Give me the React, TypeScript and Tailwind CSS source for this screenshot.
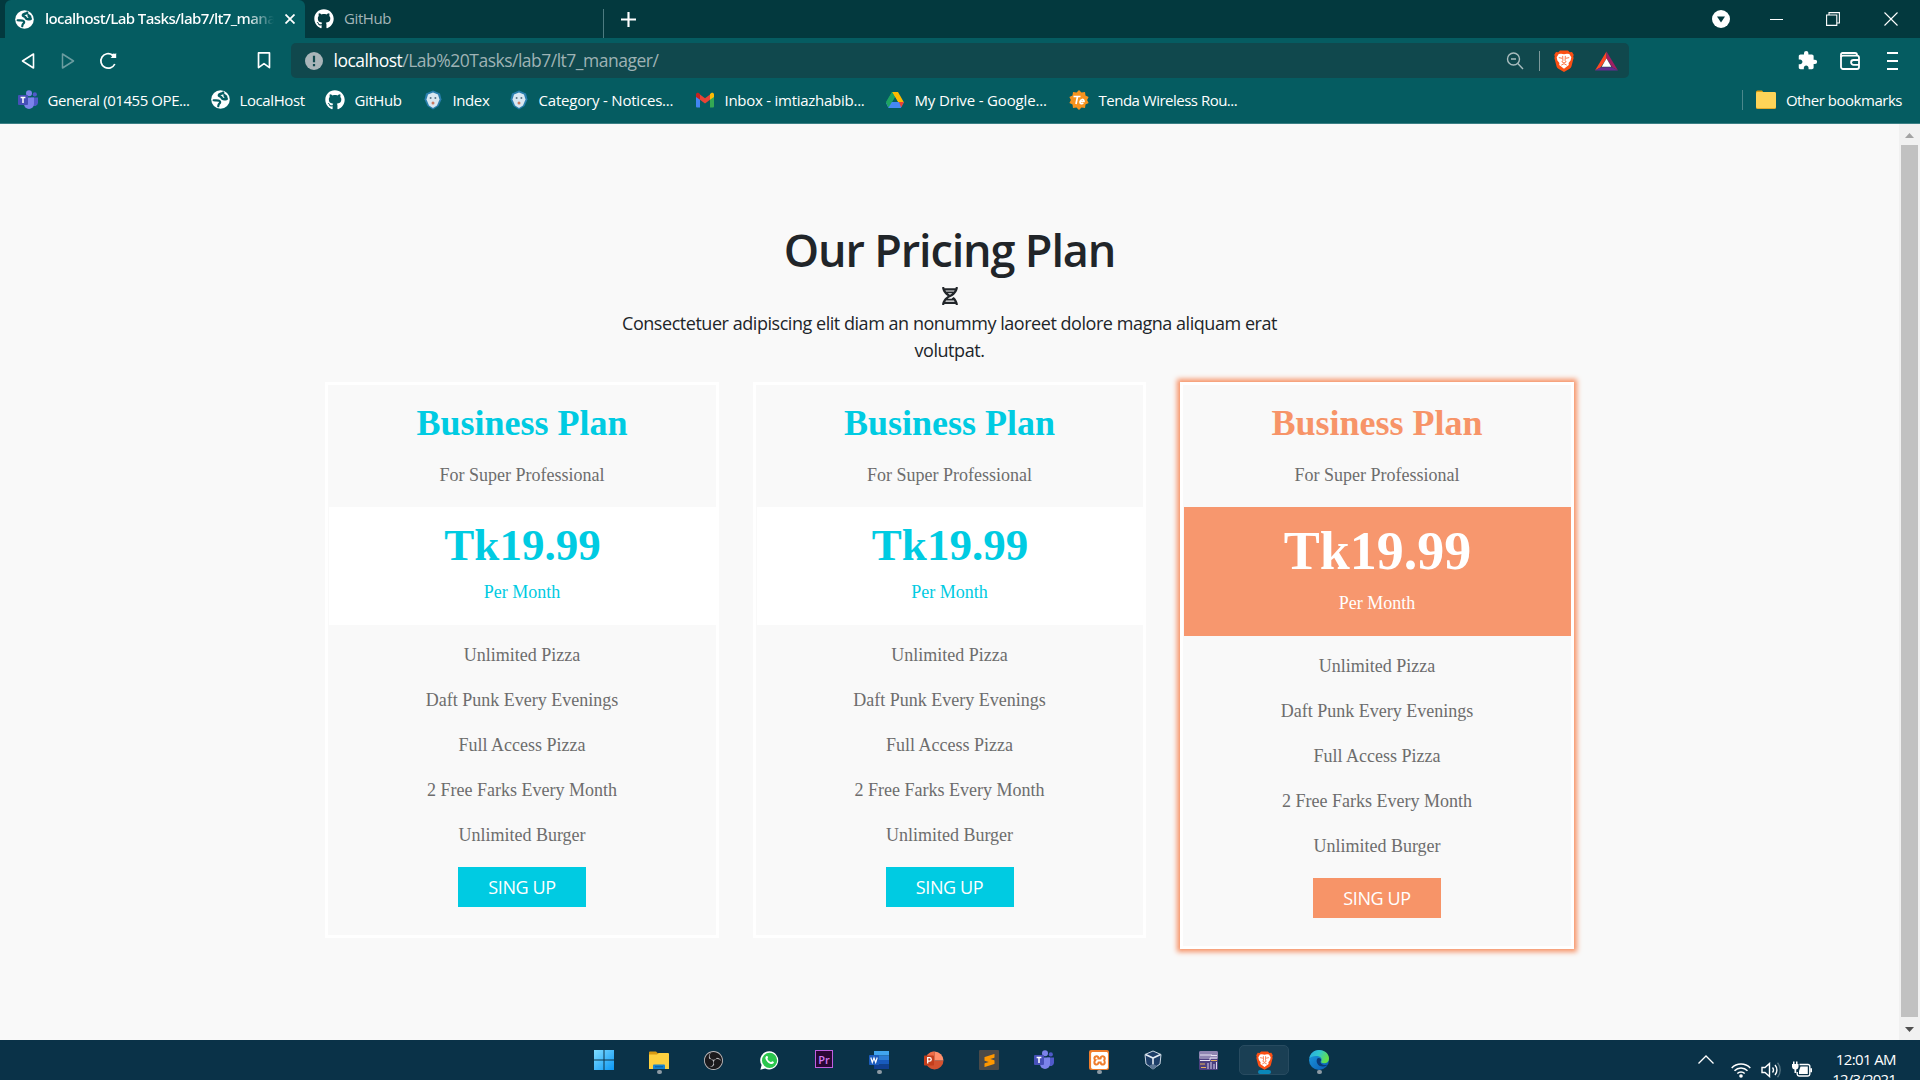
import React from "react";
import { FaGithub, FaDna } from "react-icons/fa";
import { MdExtension } from "react-icons/md";
import { SiObsstudio, SiXampp, SiSublimetext } from "react-icons/si";

const ui = "font-['Open_Sans','Noto_Sans',sans-serif]";

function Globe({ className }: { className: string }) {
  return (
    <svg viewBox="0 0 20 20" className={className}>
      <circle cx="10" cy="10" r="9.800" fill="#fff" />
      <path
        d="M12.800 2.800C11 4.200 8.500 3.800 8.200 5.400c-.2 1.500 2.300 1 2.800 2.400.5 1.500 2.300 2.500 5.300 1.700"
        fill="none"
        stroke="#055c61"
        strokeWidth="2.600"
        strokeLinecap="round"
      />
      <path d="M12.500 2.500l4.500 3.500.8 4-3-.5-1.500-3z" fill="#055c61" />
      <path
        d="M2.800 10.800c2 .2 4.800-.3 6 .6 1.500 1.200.8 2.400-.3 3.200-.9.700-.5 1.600-.9 2.400"
        fill="none"
        stroke="#055c61"
        strokeWidth="2.300"
        strokeLinecap="round"
      />
    </svg>
  );
}

function Teams({ className }: { className: string }) {
  return (
    <svg viewBox="0 0 20 20" className={className}>
      <circle cx="16.800" cy="4.400" r="2.100" fill="#5059c9" />
      <path d="M13 7.500h7v5.500a3.500 3.500 0 0 1-6 2z" fill="#5059c9" />
      <circle cx="11" cy="3.300" r="3" fill="#7b83eb" />
      <path d="M6 7.500h10v6.500a5 5 0 0 1-10 0z" fill="#7b83eb" />
      <rect x="0" y="5" width="10" height="10" rx="1" fill="#4650b8" />
      <path d="M2.600 7.500h4.800M5 7.500v5.500" stroke="#fff" strokeWidth="1.500" />
    </svg>
  );
}

function Crest() {
  return (
    <svg viewBox="0 0 20 20" className="size-5">
      <path d="M10 .5l7 3 1.500 6-3 6.500L10 19.500 4.500 16 1.500 9.500l1.500-6z" fill="#2a7fae" />
      <path d="M10 2.500l5 2 1.500 5-2.500 6-4 2.500-4-2.500-2.500-6L5 4.500z" fill="#d9e8f2" />
      <circle cx="7.600" cy="8" r="1" fill="#587484" />
      <circle cx="12.400" cy="8" r="1" fill="#587484" />
      <circle cx="10" cy="13" r="1.500" fill="#c97a62" />
    </svg>
  );
}

function Gmail() {
  return (
    <svg viewBox="0 0 20 20" className="size-5">
      <path d="M1 6v10.500a1 1 0 0 0 1 1h3V8z" fill="#4285f4" />
      <path d="M19 6v10.500a1 1 0 0 1-1 1h-3V8z" fill="#34a853" />
      <path d="M5 4.500l5 3.800 5-3.800v5.300l-5 3.800-5-3.800z" fill="#ea4335" />
      <path d="M1 7V4.500C1 2.700 3 2.300 4 3.200l1 .8v5.800z" fill="#c5221f" />
      <path d="M19 7V4.500c0-1.800-2-2.200-3-1.300l-1 .8v5.800z" fill="#fbbc04" />
    </svg>
  );
}

function Drive() {
  return (
    <svg viewBox="0 0 20 20" className="size-5">
      <path d="M7 2h6L4.500 17 1 12z" fill="#1ea362" />
      <path d="M7 2h6l6 10.500h-6z" fill="#ffba00" />
      <path d="M4.500 12H19l-3.200 6H3.500L1 13z" fill="#4688f4" />
      <path d="M14 12h5l-2.800 5.600z" fill="#ea4335" />
      <path d="M10 7l3 5H7.200z" fill="#055c61" />
      <path d="M7 2L1 12.800 3.500 17.500 10 7z" fill="#1ea362" />
    </svg>
  );
}

function Tenda() {
  return (
    <svg viewBox="0 0 20 20" className="size-5">
      <path
        d="M10 0l2.500 2.400L16 2l.5 3.500L19.600 7l-1.500 3 1.500 3-3.100 1.500L16 18l-3.500-.4L10 20l-2.500-2.400L4 18l-.5-3.500L.4 13l1.500-3L.4 7l3.100-1.500L4 2l3.500.4z"
        fill="#f7931e"
      />
      <path d="M4.500 6.500h7M8.500 6.500l-1.500 7.500M11 11.500h4c0-3-3.600-2.500-4 .3-.2 2 2 2.400 3.300 1.400" fill="none" stroke="#fff" strokeWidth="1.700" />
    </svg>
  );
}

function BraveLion({ className }: { className: string }) {
  return (
    <svg viewBox="0 0 20 22" className={className}>
      <path d="M6 .5h8l1.700 1.800 2.300-.3 1.700 2.700-.5 2 .4 1.300-2.100 8.200c-.3 1.100-1 1.900-1.900 2.500L10 22l-5.600-3.300c-.9-.6-1.600-1.400-1.900-2.500L.4 8l.4-1.300-.5-2L2 2l2.300.3z" fill="#fb4f14" />
      <path d="M7 3.700l3 .6 3-.6 2.300.3 2 3.200-.7 3.300-2 2.500.2 2-4.800 3.700L5.200 15l.2-2-2-2.500-.7-3.300 2-3.200z" fill="#fff" />
      <path d="M4.800 7.600l3.400.7M15.200 7.600l-3.400.7M8.700 5.900l.2 4.600-1 1.300 2.100 1.200 2.100-1.200-1-1.300.2-4.600M7.300 15.100L10 13.700l2.700 1.400" fill="none" stroke="#fb4f14" strokeWidth=".8" />
    </svg>
  );
}

function Bookmark({ icon, label, box, text }: { icon: React.ReactNode; label: string; box: string; text: string }) {
  return (
    <div className={`flex shrink-0 items-center ${box}`}>
      <span className="flex w-5 shrink-0 justify-center">{icon}</span>
      <span className={`ml-[9.500px] whitespace-nowrap text-[15px] leading-[20px] text-white ${text}`}>{label}</span>
    </div>
  );
}

function TabStrip() {
  return (
    <div className="flex h-[38px] bg-[#03393e] pl-[5px]">
      <div className="flex w-[300px] items-center rounded-t-md bg-[#055c61] pl-[10px] text-white">
        <Globe className="size-[19px]" />
        <span className="ml-[11px] w-[229px] overflow-hidden whitespace-nowrap bg-gradient-to-r from-white from-88% to-transparent bg-clip-text pb-[2px] text-[15px] font-semibold tracking-[-0.62px] text-transparent">
          localhost/Lab Tasks/lab7/lt7_manager
        </span>
        <svg viewBox="0 0 10 10" className="ml-[11px] size-[10px]" stroke="#fff" strokeWidth="1.800">
          <path d="M.5.5l9 9M9.500.5l-9 9" />
        </svg>
      </div>
      <div className="flex w-[299px] items-center pl-[9px]">
        <FaGithub className="size-5 text-white" />
        <span className="ml-[10px] pb-[2px] text-[15px] tracking-[-0.4px] text-[#a3b5b8]">GitHub</span>
        <div className="ml-auto mt-[9px] h-[29px] w-px bg-[#4d7b80]" />
      </div>
      <svg viewBox="0 0 14 14" className="ml-[17px] mt-3 size-[15px]" stroke="#fff" strokeWidth="2">
        <path d="M7 0v14M0 7h14" />
      </svg>
      <div className="ml-auto flex items-center">
        <svg viewBox="0 0 18 18" className="mr-[40px] size-[18px]">
          <circle cx="9" cy="9" r="9" fill="#fff" />
          <path d="M5 6.500h8L9 12.500z" fill="#03393e" />
        </svg>
        <div className="mr-[43px] h-px w-[13px] bg-white" />
        <svg viewBox="0 0 14 14" className="mr-[44px] size-[14px]" fill="none" stroke="#fff" strokeWidth="1.100">
          <path d="M.6 3h10.200v10.400H.6zM3 3V.6h10.400V11h-2.400" />
        </svg>
        <svg viewBox="0 0 14 14" className="mr-[22px] size-[14px]" stroke="#fff" strokeWidth="1.100">
          <path d="M.5.5l13 13M13.500.5l-13 13" />
        </svg>
      </div>
    </div>
  );
}

function AddressRow() {
  return (
    <div className="flex h-[45px] items-center pl-[21px]">
      <svg viewBox="0 0 14 16" className="h-4 w-[14px]" fill="none" stroke="#fff" strokeWidth="1.600" strokeLinejoin="round">
        <path d="M12.500 1v14L1.500 8z" />
      </svg>
      <svg viewBox="0 0 14 16" className="ml-[26px] h-4 w-[14px]" fill="none" stroke="#6b9da0" strokeWidth="1.500" strokeLinejoin="round">
        <path d="M1.500 1v14l11-7z" />
      </svg>
      <svg viewBox="0 0 18 18" className="ml-[24px] size-[18px]" fill="none" stroke="#fff" strokeWidth="1.700">
        <path d="M15.800 12A7.300 7.300 0 1 1 13.500 3" />
        <path d="M11.500 6h5.700V1z" fill="#fff" stroke="none" />
        <circle cx="14.800" cy="3.600" r="2.200" fill="#fff" stroke="none" />
      </svg>
      <svg viewBox="0 0 14 18" className="ml-[140px] h-[17px] w-[14px]" fill="none" stroke="#fff" strokeWidth="1.800" strokeLinejoin="round">
        <path d="M1.200 1h11.600v15.500L7 12.300l-5.800 4.200z" />
      </svg>
      <div className="ml-[20px] flex h-[35px] w-[1338px] items-center rounded-[5px] bg-[#10484d] pl-[13.500px]">
        <svg viewBox="0 0 18 18" className="size-[18px]">
          <circle cx="9" cy="9" r="9" fill="#a9b5b9" />
          <path d="M9 3.800v6.400M9 12v2.300" stroke="#10484d" strokeWidth="2.200" />
        </svg>
        <span className="ml-[11px] whitespace-nowrap text-[17.500px] tracking-[-0.5px] text-[#9fb3b5]">
          <span className="text-white">localhost</span>/Lab%20Tasks/lab7/lt7_manager/
        </span>
        <svg viewBox="0 0 18 18" className="ml-auto size-[18px]" fill="none" stroke="#a9bcbe" strokeWidth="1.400">
          <circle cx="7.500" cy="7" r="6" />
          <path d="M11.800 11.500l5.200 5.500M5 7h5" />
        </svg>
        <div className="ml-[15px] h-5 w-px bg-[#7d999b]" />
        <BraveLion className="ml-[14px] h-[22px] w-5" />
        <svg viewBox="0 0 24 20" className="ml-[21px] mr-[11px] h-5 w-[23px]">
          <path d="M12 0L0 20l6-3.500 6-9z" fill="#ff4724" />
          <path d="M12 0l12 20-6-3.500-6-9z" fill="#9e1f63" />
          <path d="M0 20h24l-6-3.500H6z" fill="#662d91" />
          <path d="M12 7.500l5 8.500H7z" fill="#fff" />
        </svg>
      </div>
      <MdExtension className="ml-[168px] size-[21px] text-white" />
      <svg viewBox="0 0 20 18" className="ml-[22px] h-[18px] w-5" fill="none" stroke="#fff" strokeWidth="1.800">
        <rect x="1" y="3.600" width="18" height="13.400" rx="2" />
        <path d="M1 5V2.500A1.500 1.500 0 0 1 2.500 1H15a2 2 0 0 1 2 2v.6M19 8h-5.500a2.400 2.400 0 0 0 0 4.800H19" />
      </svg>
      <div className="ml-[27px] flex h-[18px] w-[11px] flex-col justify-between">
        <div className="h-[2px] w-[11px] bg-white" />
        <div className="h-[2px] w-[11px] bg-white" />
        <div className="h-[2px] w-[11px] bg-white" />
      </div>
    </div>
  );
}

function BookmarksBar() {
  return (
    <div className="flex h-[40px] items-center pb-[7px] pl-[18px]">
      <Bookmark icon={<Teams className="size-5" />} label="General (01455 OPE..." box="w-[192px]" text="tracking-[-0.43px]" />
      <Bookmark icon={<Globe className="size-[19px]" />} label="LocalHost" box="w-[115px]" text="tracking-[-0.4px]" />
      <Bookmark icon={<FaGithub className="size-5 text-white" />} label="GitHub" box="w-[98px]" text="tracking-[-0.4px]" />
      <Bookmark icon={<Crest />} label="Index" box="w-[86px]" text="tracking-[-0.4px]" />
      <Bookmark icon={<Crest />} label="Category - Notices..." box="w-[186px]" text="tracking-[-0.2px]" />
      <Bookmark icon={<Gmail />} label="Inbox - imtiazhabib..." box="w-[190px]" text="tracking-[-0.26px]" />
      <Bookmark icon={<Drive />} label="My Drive - Google..." box="w-[184px]" text="tracking-[-0.15px]" />
      <Bookmark icon={<Tenda />} label="Tenda Wireless Rou..." box="w-[190px]" text="tracking-[-0.5px]" />
      <div className="ml-auto mr-[18px] flex items-center">
        <div className="h-5 w-px bg-[#4b888c]" />
        <svg viewBox="0 0 20 19" className="ml-[13px] h-[19px] w-5">
          <path d="M0 2A1.500 1.500 0 0 1 1.500.5H6l2 2.500H0z" fill="#e0a010" />
          <rect y="2" width="20" height="17" rx="1.500" fill="#e2ab2c" />
          <rect y="2" width="20" height="16" rx="1.500" fill="#fdd458" />
        </svg>
        <span className="ml-[10px] whitespace-nowrap text-[15px] leading-[20px] tracking-[-0.47px] text-white">Other bookmarks</span>
      </div>
    </div>
  );
}

const features = ["Unlimited Pizza", "Daft Punk Every Evenings", "Full Access Pizza", "2 Free Farks Every Month", "Unlimited Burger"];

function PlanCard({ featured = false }: { featured?: boolean }) {
  return (
    <div
      className={`w-[393.750px] border-[3px] border-white pb-7 text-center font-['Liberation_Serif',serif] text-[18px] leading-[27px] text-[#6d6d6d] ${
        featured ? "shadow-[0_0_5px_3px_#f79468]" : ""
      }`}
    >
      <h2 className={`pt-[17px] text-[36px] font-bold leading-[43px] ${featured ? "text-[#f79468]" : "text-[#00cbe2]"}`}>Business Plan</h2>
      <p className="mb-[18px] mt-[17px]">For Super Professional</p>
      <div className={`ml-px pb-[19px] ${featured ? "bg-[#f7976e] pt-3 text-white" : "bg-white pt-[11px] text-[#00cbe2]"}`}>
        <h1 className={`font-bold ${featured ? "text-[54px] leading-[65px]" : "mb-[7px] text-[45px] leading-[54px]"}`}>Tk19.99</h1>
        <p className={featured ? "-ml-px mt-[6px]" : "-ml-px"}>Per Month</p>
      </div>
      <ul className="flex flex-col gap-[18px] pt-[17px]">
        {features.map((f) => (
          <li key={f}>{f}</li>
        ))}
      </ul>
      <button
        className={`mt-[18px] h-10 w-32 text-[18px] text-white ${ui} tracking-[-0.4px] ${featured ? "bg-[#f79468]" : "bg-[#00cbe2]"}`}
      >
        SING UP
      </button>
    </div>
  );
}

function PricingPage() {
  return (
    <div className="flex h-[916px] bg-[#f9f9f9]">
      <main className="flex flex-1 flex-col items-center pt-[99px] text-[#212529]">
        <h1 className="h-[52px] text-[45px] font-semibold leading-[54px] tracking-[-1.150px]">Our Pricing Plan</h1>
        <div className="mt-3 flex h-[18px] items-center justify-center">
          <FaDna className="h-[18px] w-4" />
        </div>
        <p className="mt-[5px] text-center text-[18px] leading-[27px] tracking-[-0.460px]">
          Consectetuer adipiscing elit diam an nonummy laoreet dolore magna aliquam erat
          <br />
          volutpat.
        </p>
        <div className="mt-[18px] flex items-start gap-[33.750px]">
          <PlanCard />
          <PlanCard />
          <PlanCard featured />
        </div>
      </main>
      <div className="flex w-[21px] flex-col items-center bg-[#f1f1f1]">
        <svg viewBox="0 0 9 5" className="mt-[9px] h-[5px] w-[9px]">
          <path d="M4.500 0L9 5H0z" fill="#a3a3a3" />
        </svg>
        <div className="mt-[7px] h-[872px] w-[17px] bg-[#c1c1c1]" />
        <svg viewBox="0 0 9 5" className="mt-[10px] h-[5px] w-[9px]">
          <path d="M4.500 5L9 0H0z" fill="#505050" />
        </svg>
      </div>
    </div>
  );
}

function TaskbarApp({ children, mark = "none" }: { children: React.ReactNode; mark?: "none" | "dot" | "active" }) {
  return (
    <div
      className={`relative flex h-[30px] w-[50px] shrink-0 items-center justify-center rounded-[5px] border ${
        mark === "active" ? "border-[#284b60] bg-[#1a3f54]" : "border-transparent"
      }`}
    >
      {children}
      {mark === "dot" && <span className="absolute bottom-0 h-[4px] w-[5px] rounded-full bg-[#8d9ba5]" />}
      {mark === "active" && <span className="absolute bottom-0 h-[4px] w-[13px] rounded-full bg-[#0a87b8]" />}
    </div>
  );
}

function Taskbar() {
  return (
    <div className="flex h-[40px] justify-between bg-[#0a3248]">
      <div className="flex items-center gap-[5px] pl-[579px]">
        <TaskbarApp>
          <svg viewBox="0 0 20 20" className="size-5">
            <defs>
              <linearGradient id="win" x1="0" y1="0" x2="1" y2="1">
                <stop stopColor="#7fdcff" />
                <stop offset="1" stopColor="#0a97f5" />
              </linearGradient>
            </defs>
            <path d="M0 0h9.500v9.500H0zM10.500 0H20v9.500h-9.500zM0 10.500h9.500V20H0zM10.500 10.500H20V20h-9.500z" fill="url(#win)" />
          </svg>
        </TaskbarApp>
        <TaskbarApp mark="dot">
          <svg viewBox="0 0 20 18" className="-ml-px h-[18px] w-5">
            <path d="M0 1.500A1 1 0 0 1 1 .5h6l2 2V5H0z" fill="#d89a12" />
            <path d="M0 3.500h8l1.500-1.500H19a1 1 0 0 1 1 1V18H0z" fill="#fdd03f" />
            <path d="M4 18v-3.500a1 1 0 0 1 1-1h10a1 1 0 0 1 1 1V18z" fill="#1683cf" />
            <path d="M6 15.800h8" stroke="#0a5c9c" />
          </svg>
        </TaskbarApp>
        <TaskbarApp>
          <span className="-ml-px flex size-[19px] items-center justify-center rounded-full bg-[#1b191c]">
            <SiObsstudio className="size-[19px] text-[#b9b9bd]" />
          </span>
        </TaskbarApp>
        <TaskbarApp>
          <svg viewBox="0 0 20 20" className="size-[19px]">
            <path d="M10 .3a9.500 9.500 0 1 1-4.600 18L.4 19.700l1.300-4.900A9.500 9.500 0 0 1 10 .3z" fill="#fff" />
            <circle cx="10.100" cy="9.900" r="8" fill="#2cc64e" />
            <path d="M6.300 5.800c1-1 1.800-.5 2.100.9.300 1-.9 1.200-.4 2 .8 1.400 1.800 2.300 3.200 3 .8.3 1.100-1 1.900-.9 1.600.5 2 1.200 1 2.200-1.300 1.400-4 .7-6.200-1.500-2.200-2.200-3-4.500-1.600-5.700z" fill="#fff" />
          </svg>
        </TaskbarApp>
        <TaskbarApp>
          <span className="mb-[2px] flex size-[18px] items-center justify-center border border-[#c05fe0] bg-[#2a0634] text-[11px] font-semibold leading-none text-[#d27bf0]">
            Pr
          </span>
        </TaskbarApp>
        <TaskbarApp mark="dot">
          <svg viewBox="0 0 20 18" className="h-[18px] w-5">
            <rect x="5" width="15" height="4.500" fill="#41a5ee" />
            <rect x="5" y="4.500" width="15" height="4.500" fill="#2b7cd3" />
            <rect x="5" y="9" width="15" height="4.500" fill="#185abd" />
            <rect x="5" y="13.500" width="15" height="4.500" fill="#103f91" />
            <rect y="4" width="10" height="10" rx=".8" fill="#1b5cbe" />
            <path d="M1.800 6.500l1.500 5L5 7l1.700 4.500 1.500-5" fill="none" stroke="#fff" strokeWidth="1.200" />
          </svg>
        </TaskbarApp>
        <TaskbarApp>
          <svg viewBox="0 0 20 19" className="h-[19px] w-5">
            <path d="M10.500.5a9 9 0 1 0 9 9h-9z" fill="#d35230" />
            <path d="M10.500.5v9h9a9 9 0 0 0-9-9z" fill="#ff8f6b" />
            <path d="M10.500.5a9 9 0 0 0-8 5v4h8z" fill="#ed6c47" />
            <rect y="4.500" width="10" height="10" rx=".8" fill="#c43e1c" />
            <path d="M3.700 12.500V6.700h1.800a1.700 1.700 0 0 1 0 3.500H3.700" fill="none" stroke="#fff" strokeWidth="1.300" />
          </svg>
        </TaskbarApp>
        <TaskbarApp>
          <span className="flex size-5 items-center justify-center rounded-[1px] bg-[#4b4a48]">
            <SiSublimetext className="size-[13px] text-[#ff9800]" />
          </span>
        </TaskbarApp>
        <TaskbarApp>
          <Teams className="size-5" />
        </TaskbarApp>
        <TaskbarApp mark="dot">
          <span className="flex size-5 items-center justify-center rounded-[2px] bg-[#ef7d2c]">
            <SiXampp className="size-[17px] text-white" />
          </span>
        </TaskbarApp>
        <TaskbarApp>
          <svg viewBox="0 0 20 20" className="-ml-[2px] size-5">
            <path d="M10 1l8 3.500-1 9.500-7 5-7-5-1-9.500z" fill="#1d3e68" stroke="#c9d6e2" strokeWidth="1" />
            <path d="M2.500 4.500L10 8l7.500-3.500M10 8v8" fill="none" stroke="#e4ecf3" strokeWidth="1.600" />
            <path d="M5.500 16l4.500 3.500 4.500-3.500-4.500-2z" fill="#5b7695" />
          </svg>
        </TaskbarApp>
        <TaskbarApp>
          <svg viewBox="0 0 19 19" className="-ml-px size-[19px]">
            <rect width="19" height="19" rx="1.500" fill="#4c3f80" />
            <rect width="19" height="8" rx="1.500" fill="#8f86b2" />
            <path d="M1 4h12M1 9.500h10V7h7M12 4.500h6" stroke="#e8e4f4" fill="none" />
            <path d="M1 13h5M12 9.500h6M2 16.500h5" stroke="#e5b05a" />
            <path d="M9 12v6M12 11v7M15 13v5M17.500 11v7" stroke="#d9d4ee" />
          </svg>
        </TaskbarApp>
        <TaskbarApp mark="active">
          <BraveLion className="h-[19px] w-[17px]" />
        </TaskbarApp>
        <TaskbarApp mark="dot">
          <svg viewBox="0 0 20 20" className="size-5">
            <defs>
              <linearGradient id="edgeTop" x1="0" y1="0" x2="1" y2=".4">
                <stop stopColor="#2aa8e0" />
                <stop offset=".5" stopColor="#2fc6d0" />
                <stop offset="1" stopColor="#63e04a" />
              </linearGradient>
              <linearGradient id="edgeBody" x1="0" y1="0" x2="1" y2="1">
                <stop stopColor="#1b9de2" />
                <stop offset="1" stopColor="#0b58b0" />
              </linearGradient>
            </defs>
            <circle cx="10" cy="10" r="10" fill="url(#edgeBody)" />
            <path d="M.3 8.500C1.200 3.500 5 0 10 0c5.800 0 10 4 10 8.500 0 3-2 4.800-4.800 4.800-2.200 0-3.500-.8-3-1.700 1-1.300.9-4.800-3.700-5.600C5 5.500 1.600 6.700.3 8.500z" fill="url(#edgeTop)" />
            <path d="M8 9c-1.500 4 2 8 6.500 7.500 2-.2 3.500-1 4.200-1.800-2 .8-6.200.5-7.200-2.200-.3-1 .6-1.500.5-2.800C11.800 8 9 7.200 8 9z" fill="#0a3a78" />
          </svg>
        </TaskbarApp>
      </div>
      <div className="flex overflow-hidden pr-[24px]">
        <svg viewBox="0 0 16 9" className="mt-[15px] h-[9px] w-4" fill="none" stroke="#fff" strokeWidth="1.300">
          <path d="M.5 8.500L8 1l7.500 7.500" />
        </svg>
        <svg viewBox="0 0 20 16" className="ml-[17px] mt-[22px] h-4 w-5" fill="none" stroke="#fff" strokeWidth="1.500">
          <path d="M.7 6a13 13 0 0 1 18.600 0M3.500 8.800a9 9 0 0 1 13 0M6.300 11.500a5.200 5.200 0 0 1 7.400 0" />
          <circle cx="10" cy="14" r="1.800" fill="#fff" stroke="none" />
        </svg>
        <svg viewBox="0 0 21 16" className="ml-[10px] mt-[22px] h-4 w-[21px]" fill="none" stroke="#fff" strokeWidth="1.400">
          <path d="M1 5.500h3l4.500-4v13l-4.500-4H1zM11.500 5.500a4 4 0 0 1 0 5M14 3a7.500 7.500 0 0 1 0 10" />
          <path d="M16.500.8a11 11 0 0 1 0 14.400" stroke="#51707f" />
        </svg>
        <svg viewBox="0 0 20 16" className="ml-[10px] mt-[21px] h-4 w-5">
          <path d="M7.500 3.500H16a1.800 1.800 0 0 1 1.800 1.800v8A1.800 1.800 0 0 1 16 15H7a2 2 0 0 1-1.800-1.800V11" fill="none" stroke="#fff" strokeWidth="1.400" />
          <path d="M8.500 5.500h7.300v7.500H7v-3zM18.300 7.200H20v4h-1.700z" fill="#fff" />
          <path d="M0 3h1V.5h1.500V3h1.500V.5h1.500V3h1v3a3 3 0 0 1-2.300 2.500V12H2.500V8.500A3 3 0 0 1 0 6z" fill="#fff" />
        </svg>
        <div className="ml-5 mt-[9px] flex w-[64px] flex-col items-end whitespace-nowrap text-[15px] leading-[20px] tracking-[-0.6px] text-white">
          <span>12:01 AM</span>
          <span className="tracking-[-0.8px]">12/3/2021</span>
        </div>
      </div>
    </div>
  );
}

export default function App() {
  return (
    <div className={`flex h-[1080px] w-[1920px] flex-col overflow-hidden ${ui}`}>
      <TabStrip />
      <div className="flex h-[86px] flex-col border-b border-[#3b8085] bg-[#055c61]">
        <AddressRow />
        <BookmarksBar />
      </div>
      <PricingPage />
      <Taskbar />
    </div>
  );
}
